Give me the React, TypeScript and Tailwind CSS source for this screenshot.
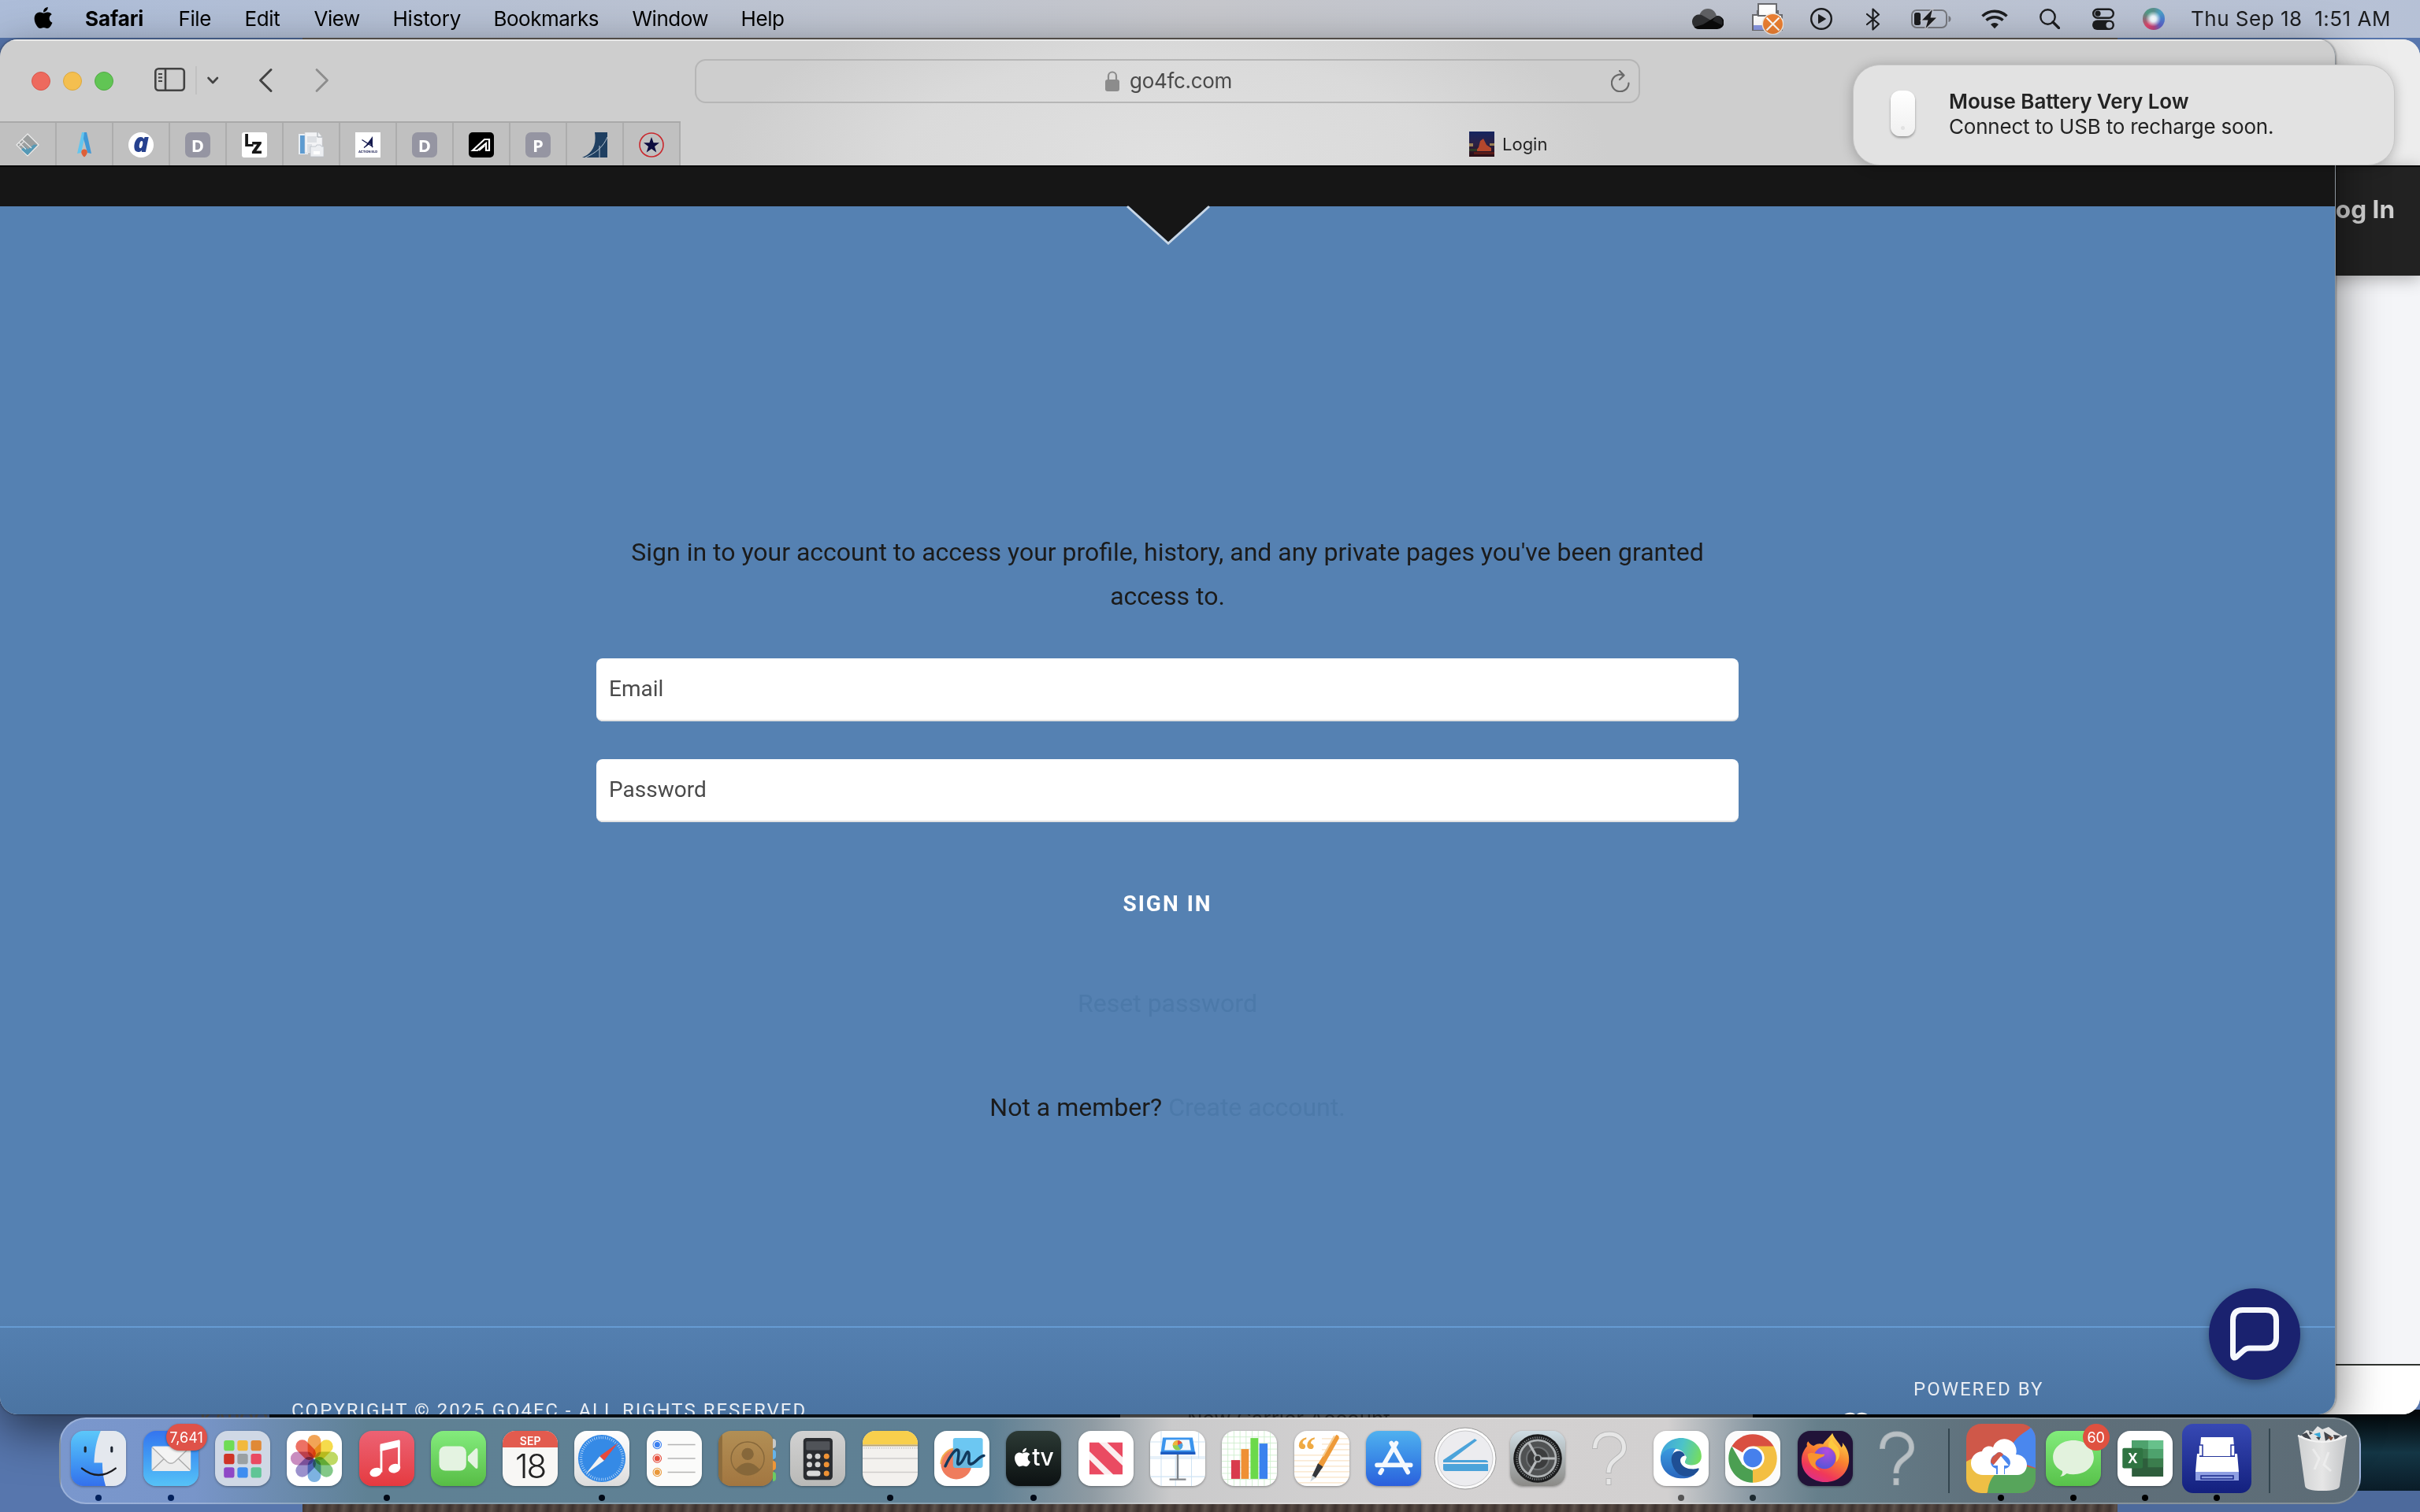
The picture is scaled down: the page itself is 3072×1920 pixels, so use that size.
import React from "react";
import { FaApple } from "react-icons/fa";

const sf = "font-['Inter','Liberation_Sans',sans-serif]";
const roboto = "font-['Roboto','Liberation_Sans',sans-serif]";

/* ---------- Menu bar ---------- */

const menus: [string, string][] = [
  ["Safari", "w-[118.5px] font-bold tracking-[-0.1px]"],
  ["File", "w-[84px] tracking-[-0.4px]"],
  ["Edit", "w-[88px] tracking-[-0.4px]"],
  ["View", "w-[100px] tracking-[-0.5px]"],
  ["History", "w-[128px] tracking-[-0.2px]"],
  ["Bookmarks", "w-[176px] tracking-[-0.5px]"],
  ["Window", "w-[138px] tracking-[-0.5px]"],
  ["Help", "w-[80px] tracking-[-0.4px]"],
];

function StatusIcons() {
  return (
    <div className="flex h-full items-center">
      <svg className="mr-9 h-[26px] w-10" viewBox="0 0 40 26">
        <circle cx="20" cy="11" r="11" fill="#606164" />
        <path d="M0 17a9 9 0 0 1 12-9l14 8-12 10H9a9 9 0 0 1-9-9z" fill="#2f3032" />
        <path d="M14 20l18-11a8.500 8.500 0 0 1 0 17H9c-3 0-5-1-6.500-2.500z" fill="#0a0a0a" />
        <path d="M26 15l5-6a8.500 8.500 0 0 1 7 12z" fill="#242527" />
      </svg>
      <svg className="mr-[34px] h-10 w-10" viewBox="0 0 40 40">
        <path d="M1 15h6v-5h26v5h5v19H1z" fill="#fff" stroke="#6b6c70" strokeWidth="2" />
        <path d="M8 1h23v15H8z" fill="#fff" stroke="#6b6c70" strokeWidth="2" />
        <path d="M2 28h16v6H2z" fill="#8a99e4" />
        <circle cx="26.500" cy="26.500" r="13.200" fill="#ee8133" stroke="#f5ede4" strokeWidth="1.500" />
        <path d="M18.500 18.500l16 16m0-16l-16 16" stroke="#fff" strokeWidth="2.200" />
      </svg>
      <svg className="mr-[43px] h-7 w-7" viewBox="0 0 28 28">
        <circle cx="14" cy="14" r="12.800" fill="none" stroke="#1c1d1f" strokeWidth="2.400" />
        <path d="M10.500 8.500v11l9-5.500z" fill="#1c1d1f" stroke="#1c1d1f" strokeLinejoin="round" />
      </svg>
      <svg className="mr-[39px] h-[29px] w-[18px]" viewBox="0 0 18 29">
        <path d="M1 8l15 12.500-7.500 7V1.500l7.500 7L1 21" fill="none" stroke="#1c1d1f" strokeWidth="2.200" strokeLinejoin="round" strokeLinecap="round" />
      </svg>
      <svg className="mr-[38px] h-7 w-[51px]" viewBox="0 0 51 28">
        <rect x="1" y="3" width="44" height="22" rx="6" fill="none" stroke="#77797f" strokeWidth="2" />
        <path d="M47.500 10v8q3-1 3-4t-3-4z" fill="#77797f" />
        <rect x="4" y="6" width="8" height="16" rx="2.500" fill="#1c1d1f" />
        <path d="M27 2L14 15.500h7.500L18.500 26 32 12.500h-7.500z" fill="#1c1d1f" stroke="#c4c6cf" strokeWidth="2.600" paintOrder="stroke" />
      </svg>
      <svg className="mr-10 h-[26px] w-[34px]" viewBox="0 0 34 26">
        <path d="M1.500 9.500a22.500 22.500 0 0 1 31 0M6.500 14.800a15.500 15.500 0 0 1 21 0" fill="none" stroke="#1c1d1f" strokeWidth="3.600" />
        <path d="M12 20a7.500 7.500 0 0 1 10 0l-5 5.200z" fill="#1c1d1f" />
      </svg>
      <svg className="mr-[41px] h-[26px] w-[26px]" viewBox="0 0 26 26">
        <circle cx="10.500" cy="10.500" r="9.200" fill="none" stroke="#1c1d1f" strokeWidth="2.400" />
        <path d="M17 17l7.500 7.500" stroke="#1c1d1f" strokeWidth="3.200" strokeLinecap="round" />
      </svg>
      <svg className="mr-9 h-7 w-7" viewBox="0 0 28 28">
        <rect x="1.200" y="1.700" width="25.600" height="11" rx="5.500" fill="none" stroke="#1c1d1f" strokeWidth="2.400" />
        <circle cx="7" cy="7.200" r="3.600" fill="#1c1d1f" />
        <rect x="0" y="15.500" width="28" height="12.500" rx="6.200" fill="#1c1d1f" />
        <circle cx="21.500" cy="21.700" r="4" fill="#bcc3d3" />
      </svg>
      <div className="mr-[33px] h-7 w-7 overflow-hidden rounded-full bg-[conic-gradient(from_0deg,#5a8f8c,#4aa0c4,#4b7fd0,#5d62c8,#b9437f,#e2466d,#8f6f7a,#4f9a86,#5a8f8c)]">
        <div className="h-full w-full bg-[radial-gradient(circle_at_48%_50%,#ffffff_0,#e9f4fb_18%,rgba(255,255,255,0)_48%)]" />
      </div>
      <span className="w-[291px] text-[26px] leading-[46px] tracking-[0.5px] whitespace-pre text-[#1c1d1f]">Thu Sep 18  1:51 AM</span>
    </div>
  );
}

function MenuBar() {
  return (
    <header className="flex h-12 items-center justify-between bg-linear-to-r from-[#adbdd9] via-[#c6c7cc] to-[#b6c1d6] pl-[39px] text-black">
      <div className="flex items-center">
        <FaApple className="mt-[-4px] mr-[37px] h-[31px] w-8" />
        {menus.map(([m, c]) => (
          <span key={m} className={`${c} text-[26px] leading-[46px] whitespace-nowrap`}>{m}</span>
        ))}
      </div>
      <StatusIcons />
    </header>
  );
}

/* ---------- Pinned tabs ---------- */

function LetterTile({ letter }: { letter: string }) {
  return (
    <div className="flex h-8 w-8 items-center justify-center rounded-[7px] bg-[#9595a2] font-['Open_Sans',sans-serif] text-[22px] leading-none font-bold text-white">{letter}</div>
  );
}

const pinned: React.ReactNode[] = [
  <svg className="h-8 w-8" viewBox="0 0 32 32">
    <path d="M16 2l14 14-14 14L2 16z" fill="#9c9f9f" stroke="#eee" strokeWidth="1.200" />
    <path d="M8 22l4.500-4 4 3.500 7.500-6L28.500 16 16 29z" fill="#5599b6" />
    <path d="M9 9l12 11M5 13l9 8.500M11.500 11.500l-6 6" stroke="#e6e6e6" strokeWidth="1.200" fill="none" />
  </svg>,
  <svg className="h-8 w-8" viewBox="0 0 32 32">
    <path d="M13 0h5l-6 26-5 1z" fill="#63c5ee" />
    <path d="M16 0h3l6 27-5-1-5-18z" fill="#4198d6" />
    <path d="M16 31.500c-6-5-4-10 0-10s6 5 0 10z" fill="#dd5f38" />
  </svg>,
  <div className="flex h-8 w-8 items-center justify-center rounded-full bg-white">
    <span className="mt-[-7px] font-['Open_Sans',sans-serif] text-[33px] leading-none font-extrabold text-[#26418f] italic">a</span>
  </div>,
  <LetterTile letter="D" />,
  <div className="relative h-8 w-8 rounded-[3px] bg-white font-['Roboto',sans-serif] leading-none font-black text-[#171717]">
    <span className="absolute top-0 left-[3px] text-[22px]">L</span>
    <span className="absolute top-[5px] left-[12px] text-[27px]">z</span>
  </div>,
  <svg className="h-8 w-8" viewBox="0 0 32 32">
    <path d="M0 2h12v26H0z" fill="#e8eef4" />
    <path d="M2 4h6v23H2z" fill="#5d9bd0" />
    <path d="M8 0h17l5 6v20H8z" fill="#f2f3f5" stroke="#cfd2d6" strokeWidth=".6" />
    <path d="M11 5h12v8H11zM11 15h6v10h-6z" fill="#dde0e4" />
    <path d="M24 0v6h6" fill="none" stroke="#9aa0a6" />
    <path d="M15 18h7l1-2h5l1 2h3v13H15z" fill="#eceef1" stroke="#b9bec6" strokeWidth=".8" />
    <path d="M19 24h8v4h-8z" fill="#fff" />
  </svg>,
  <svg className="h-8 w-8" viewBox="0 0 32 32">
    <path d="M0 0h32v32H0z" fill="#fff" />
    <path d="M11 20L22 5v15l-3.500-6z" fill="#151a4f" />
    <path d="M8.500 9.500l14 9M11 19.500l9-7" stroke="#151a4f" strokeWidth="1.400" />
    <text x="16" y="26" textAnchor="middle" fontSize="4" fontWeight="bold" fontFamily="Inter" fill="#151a4f">ACTION ELD</text>
  </svg>,
  <LetterTile letter="D" />,
  <svg className="h-8 w-8" viewBox="0 0 32 32">
    <rect width="32" height="32" rx="5" fill="#000" />
    <path d="M5 23L20 9h6v14h-4V14l-11 9zM13 23l7-6" fill="none" stroke="#fff" strokeWidth="2.200" />
  </svg>,
  <LetterTile letter="P" />,
  <svg className="h-8 w-8" viewBox="0 0 32 32">
    <path d="M16 0h16v32H0c10-4 19-12 16-32z" fill="#1f3f61" />
    <path d="M4 32C18 26 27 18 32 6M22 17v15" fill="none" stroke="#b9c6d2" strokeWidth="1" />
  </svg>,
  <svg className="h-8 w-8" viewBox="0 0 32 32">
    <circle cx="16" cy="16" r="15" fill="none" stroke="#c9282d" strokeWidth="1.600" />
    <path d="M16 6l2.600 7.300h7.400l-6 4.700 2.300 7.600L16 21l-6.300 4.600L12 18l-6-4.700h7.400z" fill="#0c0b3f" />
  </svg>,
];

/* ---------- Safari window ---------- */

function Toolbar() {
  return (
    <div className="flex h-[104px] shrink-0 items-center border-t-2 border-[#e9e9e9]">
      <div className="flex w-[196px] gap-4 pl-10">
        <i className="h-6 w-6 rounded-full border border-[#d9564b] bg-[#ed6a5e]" />
        <i className="h-6 w-6 rounded-full border border-[#dba840] bg-[#f4bf4f]" />
        <i className="h-6 w-6 rounded-full border border-[#52ab45] bg-[#61c554]" />
      </div>
      <svg className="-mt-[2px] h-9 w-56" viewBox="0 0 224 36" fill="none" stroke="#434343" strokeWidth="2.600">
        <rect x="1.300" y="3.300" width="36.500" height="27.500" rx="4" />
        <path d="M14 4v27" />
        <path d="M5 10h5M5 14.500h5M5 19h5" strokeWidth="2" />
        <path d="M53 0v36" stroke="#bfbfbf" strokeWidth="1.600" />
        <path d="M68.500 15l5.700 6 5.700-6" strokeWidth="2.600" strokeLinecap="round" strokeLinejoin="round" />
        <path d="M148 4.500L134.500 18 148 31.500" strokeWidth="3" strokeLinecap="round" strokeLinejoin="round" />
        <path d="M206 4.500L219.500 18 206 31.500" stroke="#8d8d8d" strokeWidth="2.800" strokeLinecap="round" strokeLinejoin="round" />
      </svg>
      <div className="-mt-px ml-[462px] flex h-14 w-[1200px] items-center rounded-[14px] border-2 border-[#b6b6b6] pl-[519px]">
        <svg className="h-[26px] w-[18px]" viewBox="0 0 18 26">
          <path d="M4 12V6.500a5 5 0 0 1 10 0V12" fill="none" stroke="#8c8c8c" strokeWidth="2.200" />
          <rect x="0" y="11" width="18" height="15" rx="3" fill="#8c8c8c" />
        </svg>
        <span className="ml-[13px] w-[140px] text-[26px] tracking-[-0.3px] text-[#4a4a4a]">go4fc.com</span>
        <svg className="ml-[471px] h-7 w-6" viewBox="0 0 24 28" fill="none" stroke="#6a6a6a" strokeWidth="2.200" strokeLinecap="round" strokeLinejoin="round">
          <path d="M22.500 16.500A10.800 10.800 0 1 1 16 6.500M11 1l5.500 5.600L11 12" />
        </svg>
      </div>
    </div>
  );
}

function TabBar() {
  return (
    <div className="flex h-14 shrink-0">
      <div className="flex border-t-2 border-[#a9a9a9] bg-[#c0c0c0]">
        {pinned.map((icon, i) => (
          <div key={i} className="flex w-[72px] items-center justify-center border-r-2 border-[#adadad] pt-px">{icon}</div>
        ))}
      </div>
      <div className="flex flex-1 items-center pt-[2px] pl-[1001px]">
        <svg className="h-8 w-8" viewBox="0 0 32 32">
          <defs>
            <linearGradient id="sky" x1="0" y1="0" x2="0" y2="1"><stop stopColor="#152560" /><stop offset=".5" stopColor="#2c2145" /><stop offset="1" stopColor="#2a0d12" /></linearGradient>
          </defs>
          <path d="M0 0h32v32H0z" fill="url(#sky)" />
          <path d="M14 12l4-3 4 8 6 4v4H8l4-5z" fill="#b4472c" />
          <path d="M0 15h5v4H0zM26 15h6v3h-6z" fill="#9a8055" />
          <path d="M0 22h10v3H0z" fill="#2f3a26" />
          <path d="M6 26h26v3H6z" fill="#5a1b18" />
        </svg>
        <span className="ml-[10px] text-[22px] text-[#242424]">Login</span>
      </div>
    </div>
  );
}

function LoginPage() {
  return (
    <div className={`relative flex min-h-0 flex-1 flex-col items-center bg-[linear-gradient(#5581b2_0,#5581b2_92%,#4b74a2_100%)] ${roboto}`}>
      <div className="h-[52px] w-full shrink-0 border-t-2 border-black bg-[#161616]" />
      <svg className="mt-[-2px] h-[52px] w-28 shrink-0" viewBox="0 0 112 52">
        <path d="M5 2L57 49 109 2" fill="none" stroke="#c9d7e6" strokeWidth="3" />
        <path d="M5 0H109L57 47z" fill="#161616" />
      </svg>
      <p className="mt-[361px] w-[1450px] text-center text-[32px] leading-[56px] text-[#1b1b1b]">
        Sign in to your account to access your profile, history, and any private pages you've been granted access to.
      </p>
      <div className="mt-[51px] flex w-[1450px] flex-col gap-12">
        <div className="flex h-20 items-center rounded-lg border-b-2 border-[#e2e2e2] bg-white px-4 text-[28px] text-[#4a4a4a]">Email</div>
        <div className="flex h-20 items-center rounded-lg border-b-2 border-[#e2e2e2] bg-white px-4 text-[28px] text-[#4a4a4a]">Password</div>
      </div>
      <button className="mt-[84px] text-[28px] leading-10 font-bold tracking-[2px] text-white">SIGN IN</button>
      <a className="mt-[78px] text-[32px] leading-[56px] text-[#4c79a9]">Reset password</a>
      <p className="mt-[76px] text-[32px] leading-[56px] text-[#1b1b1b]">
        Not a member? <a className="text-[#4c79a9]">Create account.</a>
      </p>
      <div className="mt-[250px] h-[2px] w-full shrink-0 bg-[#669bd3]" />
      <footer className="flex min-h-0 w-full flex-1 items-start overflow-hidden text-[24px] tracking-[2px] text-[#e8edf3]">
        <span className="mt-[87px] ml-[370px] w-[1968px] whitespace-nowrap">COPYRIGHT © 2025 GO4FC - ALL RIGHTS RESERVED</span>
        <svg className="mt-[107px] h-[10px] w-9" viewBox="0 0 36 10" fill="none" stroke="#fff" strokeWidth="4">
          <path d="M2 10c0-9 14-9 15-3M19 7c1-6 15-6 15 3" />
        </svg>
        <span className="mt-[60px] ml-[55px] whitespace-nowrap">POWERED BY</span>
      </footer>
      <div className="absolute right-11 bottom-11 flex h-[116px] w-[116px] items-center justify-center rounded-full bg-[#1a226f] shadow-[0_4px_12px_rgba(0,0,0,0.35)]">
        <svg className="h-[68px] w-[62px]" viewBox="0 0 62 68">
          <path d="M3.500 16Q3.500 3.500 16 3.500H45Q58.500 3.500 58.500 16V39Q58.500 52 45 52H24Q20 52 17 55L8 63Q3.500 66 3.500 60Z" fill="none" stroke="#f6f8fd" strokeWidth="7" strokeLinejoin="round" />
        </svg>
      </div>
    </div>
  );
}

function SafariWindow() {
  return (
    <section className="absolute top-[50px] left-0 flex h-[1746px] w-[2965px] flex-col overflow-hidden rounded-[22px] border-r border-[#8f979f] bg-[radial-gradient(ellipse_560px_220px_at_1480px_150px,#e0e0e0_0,#dadada_60%,#cecece_100%)] shadow-[0_20px_60px_rgba(0,0,0,0.55),0_0_3px_rgba(0,0,0,0.6)]">
      <Toolbar />
      <TabBar />
      <LoginPage />
    </section>
  );
}

/* ---------- Dock ---------- */

function Tile({ bg = "", children }: { bg?: string; children?: React.ReactNode }) {
  return (
    <div className={`h-[70px] w-[70px] overflow-hidden rounded-2xl shadow-[0_1px_3px_rgba(0,0,0,0.35)] ${bg}`}>
      <svg className="h-full w-full" viewBox="0 0 100 100">{children}</svg>
    </div>
  );
}

const Finder = () => (
  <Tile bg="bg-linear-to-b from-[#5cc8fa] to-[#3470ec]">
    <path d="M54 0C46 18 43 36 42 58h15c0 16 2 29 6 42h37V0z" fill="#e4e8ee" />
    <path d="M26 30v7M74 30v7" stroke="#1c2430" strokeWidth="4.500" strokeLinecap="round" />
    <path d="M20 68q30 24 61 0" fill="none" stroke="#1c1c20" strokeWidth="3.500" strokeLinecap="round" />
  </Tile>
);
const Mail = () => (
  <div className="relative">
    <Tile bg="bg-linear-to-b from-[#3574ee] to-[#56c2f7]">
      <rect x="15" y="28" width="71" height="45" rx="4" fill="#ececec" />
      <path d="M16 71l22-21M85 71L63 50" stroke="#aaa" strokeWidth="2" />
      <path d="M16 30l27 26q7 6 14 0l27-26" fill="#f4f4f4" stroke="#b0b0b0" strokeWidth="2" />
    </Tile>
    <span className="absolute -top-[9px] left-[29px] flex h-[34px] w-[52px] items-center justify-center rounded-full bg-[#df5249] text-[18px] text-white shadow-[0_1px_3px_rgba(0,0,0,0.4)]">7,641</span>
  </div>
);
const launch = ["#6fdc55", "#f2b93c", "#e08936", "#cf3527", "#9aa0a3", "#ea4a62", "#8e48c6", "#3f8df0", "#5fc596"];
const Launchpad = () => (
  <Tile bg="bg-[#cfd8e5]">
    {launch.map((c, i) => (
      <rect key={c} x={16 + (i % 3) * 24.500} y={17 + Math.floor(i / 3) * 24.500} width="19" height="19" rx="4" fill={c} />
    ))}
  </Tile>
);
const petals = ["#f0953a", "#f3d52f", "#b5d34a", "#6fbf74", "#68a5dc", "#8b7fc4", "#c07ab5", "#ea5a4a"];
const Photos = () => (
  <Tile bg="bg-white">
    {petals.map((c, i) => (
      <rect key={c} x="38" y="7" width="24" height="42" rx="12" fill={c} fillOpacity=".86" transform={`rotate(${i * 45} 50 50)`} className="mix-blend-multiply" />
    ))}
  </Tile>
);
const Music = () => (
  <Tile bg="bg-linear-to-b from-[#ec6274] to-[#e5393f]">
    <path d="M40 75V28l32-8v47" fill="none" stroke="#fff" strokeWidth="4" />
    <path d="M38 24l35-8v13l-35 8z" fill="#fff" />
    <ellipse cx="30" cy="75" rx="11" ry="8" fill="#fff" transform="rotate(-18 30 75)" />
    <ellipse cx="64" cy="68" rx="11" ry="8" fill="#fff" transform="rotate(-18 64 68)" />
  </Tile>
);
const FaceTime = () => (
  <Tile bg="bg-linear-to-b from-[#84ec7d] to-[#57bd45]">
    <rect x="15" y="28" width="49" height="44" rx="11" fill="#e4f3e1" />
    <path d="M67 46l14-14q4-2 4 3v30q0 5-4 3L67 54z" fill="#e4f3e1" />
  </Tile>
);
const Calendar = () => (
  <div className="flex h-[70px] w-[70px] flex-col items-center overflow-hidden rounded-2xl bg-[#f8f7f5] shadow-[0_1px_3px_rgba(0,0,0,0.35)]">
    <div className="flex h-[21px] w-full items-center justify-center bg-[#e25b4e] pt-1 text-[14px] font-semibold text-white">SEP</div>
    <span className="mt-[1px] text-[42px] leading-[46px] font-light tracking-[-2px] text-[#222]">18</span>
  </div>
);
const Compass = () => (
  <Tile bg="bg-linear-to-b from-white to-[#dcdcdc]">
    <circle cx="50" cy="50" r="43" fill="#358ae6" />
    <circle cx="50" cy="50" r="38" fill="none" stroke="#cfe4fa" strokeWidth="5" strokeDasharray="1 3" />
    <path d="M79 22L46 46l8 8z" fill="#e8493c" />
    <path d="M21 78l25-32 8 8z" fill="#f2f2f2" />
  </Tile>
);
const Reminders = () => (
  <Tile bg="bg-[#fbfbfa]">
    {["#3a7ff0", "#e5503f", "#e9983a"].map((c, i) => (
      <g key={c}>
        <circle cx="19" cy={25 + i * 25} r="5" fill={c} />
        <circle cx="19" cy={25 + i * 25} r="7.500" fill="none" stroke={c} strokeWidth="1.500" />
        <path d={`M38 ${25 + i * 25}h50`} stroke="#b4b4b4" strokeWidth="2" />
      </g>
    ))}
  </Tile>
);
const Contacts = () => (
  <div className="relative ml-1 flex w-[74px]">
    <Tile bg="bg-linear-to-b from-[#b28f55] to-[#a27640]">
      <path d="M0 0h7v100H0z" fill="#8d6c3d" />
      <circle cx="53" cy="50" r="30" fill="none" stroke="#86673a" strokeWidth="2" />
      <circle cx="53" cy="42" r="11" fill="#86673a" />
      <path d="M31 70q22-24 44 0q-22 20-44 0z" fill="#86673a" />
    </Tile>
    <div className="-ml-px flex flex-col gap-[2px] pt-[10px]">
      <i className="h-3 w-1 rounded-r bg-[#c9c9c6]" />
      <i className="h-3 w-1 rounded-r bg-[#66b4ea]" />
      <i className="h-3 w-1 rounded-r bg-[#ee9638]" />
      <i className="h-3 w-1 rounded-r bg-[#6ccb62]" />
    </div>
  </div>
);
const Calculator = () => (
  <Tile bg="bg-linear-to-b from-[#d2d2d2] to-[#b9b9b7]">
    <rect x="24" y="13" width="53" height="76" rx="6" fill="#2a2c30" />
    <rect x="29" y="19" width="43" height="16" rx="2" fill="#505358" />
    {[46, 61].map((y) => [35, 50, 66].map((x, i) => <circle key={`${x}-${y}`} cx={x} cy={y} r="5" fill={i === 2 ? "#ef9234" : "#d3d3d3"} />))}
    <rect x="30" y="72" width="25" height="10" rx="5" fill="#d9d9d9" />
    <circle cx="66" cy="77" r="5" fill="#ef9234" />
  </Tile>
);
const Notes = () => (
  <Tile bg="bg-[#f3f1ee]">
    <path d="M0 0h100v25H0z" fill="#f8cf4c" />
    <path d="M0 26.500h100" stroke="#b9a676" strokeWidth="3" />
    <path d="M2 31h98" stroke="#bbb" strokeWidth="2" strokeDasharray="1.500 2.500" />
    <path d="M0 50h100M0 75h100" stroke="#cfcdcb" strokeWidth="2" />
  </Tile>
);
const Freeform = () => (
  <Tile bg="bg-white">
    <circle cx="40" cy="60" r="28" fill="#ef7c5d" />
    <path d="M12 60a28 28 0 0 1 28-28" fill="none" stroke="#f3ac4c" strokeWidth="3" />
    <rect x="34" y="13" width="54" height="54" rx="4" fill="#58bff0" fillOpacity=".88" />
    <path d="M20 64C30 42 42 28 44 37S38 64 46 60 58 34 62 39 58 62 67 60 80 46 90 45" fill="none" stroke="#123a5e" strokeWidth="5" strokeLinecap="round" />
  </Tile>
);
const AppleTV = () => (
  <div className="flex h-[70px] w-[70px] items-center justify-center rounded-2xl bg-linear-to-b from-[#2c3a35] to-[#0c1112] text-white shadow-[0_1px_3px_rgba(0,0,0,0.35)]">
    <FaApple className="-mt-1 h-[27px] w-[22px]" />
    <span className="-mt-1 ml-px text-[30px] leading-none font-medium tracking-[-0.5px]">tv</span>
  </div>
);
const News = () => (
  <Tile bg="bg-white">
    <rect x="20" y="21" width="60" height="58" rx="2" fill="#fbeef0" />
    <path d="M20 21h17l43 42v16H63L20 37z" fill="#ea4b62" />
    <path d="M52 21h28v27zM20 52v27h27z" fill="#ea4b62" />
  </Tile>
);
const Keynote = () => (
  <Tile bg="bg-white">
    <path d="M0 20h100M0 47h100M0 50h100M0 83h100M20 0v100M46 45v55M75 45v55M88 0v50" stroke="#cfe3f4" strokeWidth="1.500" />
    <path d="M23 12h54l5 31H19z" fill="#3a94ee" />
    <path d="M19 38h63v5H19z" fill="#1d5bc0" />
    <path d="M29 16h42l3 19H26z" fill="#f4f9fd" />
    <circle cx="50" cy="26" r="9" fill="#8ccf50" />
    <path d="M50 26V17a9 9 0 0 1 8 5z" fill="#e14f43" />
    <path d="M50 26V17a9 9 0 0 0-9 9z" fill="#f2b33c" />
    <path d="M50 26l8-4a9 9 0 0 1-3 12z" fill="#4aa0e8" />
    <path d="M50 43v45" stroke="#7b828b" strokeWidth="3.500" />
    <path d="M35 88h30" stroke="#84878c" strokeWidth="3.500" />
  </Tile>
);
const Numbers = () => (
  <Tile bg="bg-white">
    {[11, 22, 33, 44, 55, 66, 77, 88].map((v) => <path key={v} d={`M0 ${v}h100M${v} 0v100`} stroke="#cdeecb" strokeWidth="1.200" />)}
    <rect x="17" y="53" width="16" height="34" fill="#d93b4c" />
    <rect x="35" y="33" width="14" height="54" fill="#ef9034" />
    <rect x="52" y="13" width="14" height="74" fill="#6bd94a" />
    <rect x="68" y="23" width="15" height="64" fill="#3a82ee" />
  </Tile>
);
const Pages = () => (
  <Tile bg="bg-white">
    <path d="M0 44h100M0 54h100M0 64h100M0 74h100M0 84h100M0 94h100M50 14h50M50 24h50M50 34h50" stroke="#fae3c6" strokeWidth="1.800" />
    <text x="5" y="59" fontSize="68" fontFamily="Liberation Serif" fontWeight="bold" fill="#efaa43">“</text>
    <path d="M76 7q6 1 5 7L50 69l-9-6z" fill="#ee9a38" />
    <path d="M73 9L52 46" stroke="#f7cf96" strokeWidth="3" />
    <path d="M43 59l9 6-14 21-6-4z" fill="#34363a" />
    <path d="M33 81l6 4-10 7z" fill="#cbd5db" />
  </Tile>
);
const AppStore = () => (
  <Tile bg="bg-linear-to-b from-[#50b1ef] to-[#2c5fdc]">
    <path d="M55 22L32 62M29 71l-3 5M46 22l30 53M20 62h61" stroke="#f5f9fd" strokeWidth="8" strokeLinecap="round" />
  </Tile>
);
const ScanCircle = () => (
  <svg className="h-[80px] w-[80px]" viewBox="0 0 80 80">
    <circle cx="40" cy="40" r="39" fill="#fbfbfb" stroke="#9a9a9a" />
    <circle cx="40" cy="40" r="35" fill="#ececef" stroke="#c9c9cc" />
    <path d="M52 15l3 2-33 25h43q4 0 4 3H12v-3z" fill="#4ba3da" />
    <path d="M12 47h57v9H15q-3 0-3-3z" fill="#4ba3da" />
  </svg>
);
const Settings = () => (
  <Tile bg="bg-linear-to-b from-[#cfdde4] to-[#8b8a87]">
    <circle cx="50" cy="50" r="44" fill="#1b1c1d" />
    <circle cx="50" cy="50" r="38" fill="none" stroke="#74787a" strokeWidth="3.500" strokeDasharray="2 2" />
    <circle cx="50" cy="50" r="33" fill="#505253" stroke="#adb1b3" strokeWidth="4" />
    <circle cx="50" cy="50" r="20" fill="#3c3d3e" stroke="#6d7072" strokeWidth="3" />
    <path d="M50 50h32M50 50L34 22M50 50L34 78" stroke="#b7babc" strokeWidth="4.500" />
    <circle cx="50" cy="50" r="6" fill="#303132" stroke="#9fa3a5" strokeWidth="3" />
  </Tile>
);
const Question = ({ dark }: { dark?: boolean }) => (
  <svg className="h-[70px] w-[46px]" viewBox="0 0 46 70" fill="none" stroke={dark ? "#a7b0b5" : "#b7b7b7"} strokeWidth="7">
    <path d="M4.500 23C4.500 10 12 4 23 4S41.500 11 41.500 21C41.500 36 22 34 22 54M22 60v9" />
    <path d="M4.500 22C5 10 12 4 23 4S41.500 11 41.500 21C41.500 36 22 34 22 53M22 61v7" stroke={dark ? "#b9c0c4" : "#e6e6e6"} strokeWidth="5" />
  </svg>
);
const Edge = () => (
  <Tile bg="bg-white">
    <defs>
      <linearGradient id="edgeTop" x1="0" y1=".3" x2="1" y2=".5"><stop stopColor="#3fa3dc" /><stop offset=".5" stopColor="#4cc3c9" /><stop offset="1" stopColor="#74dc62" /></linearGradient>
      <linearGradient id="edgeMid" x1="0" y1="0" x2="0" y2="1"><stop stopColor="#3a9be0" /><stop offset="1" stopColor="#2a66bd" /></linearGradient>
    </defs>
    <path d="M13 48C14 26 31 13 50 13s37 14 37 33c0 12-10 17-20 16s-12-5-9-9-1-15-12-19-26 1-33 14z" fill="url(#edgeTop)" />
    <path d="M13 46c6-12 18-17 28-14-8 6-10 26 0 38s24 14 36 7C68 85 57 87 49 86 25 85 11 66 13 46z" fill="url(#edgeMid)" />
    <path d="M35 42c7-9 20-6 22 3-8 3-8 13 2 20s19 3 23 3c2 1-2 7-9 12-14 6-28 1-34-9s-9-21-4-29z" fill="#1f4f95" />
    <path d="M57 45c-10 1-11 12-3 19s18 5 25 2c-6-1-23-3-22-10s6-8 0-11z" fill="#fff" />
  </Tile>
);
const Chrome = () => (
  <Tile bg="bg-[#fbfbfb]">
    <path d="M50 50L12 28a44 44 0 0 1 76 0z" fill="#d94f41" />
    <path d="M50 50L88 28a44 44 0 0 1-38 66z" fill="#f3bf42" />
    <path d="M50 28h38l-17 34L50 94l19-34z" fill="#f3bf42" />
    <path d="M12 28l19 33 19 11 0 22A44 44 0 0 1 12 28z" fill="#4b9f52" />
    <path d="M50 94l18-32-18 8z" fill="#f3bf42" />
    <circle cx="50" cy="49" r="21" fill="#fff" />
    <circle cx="50" cy="49" r="17" fill="#4680ec" />
  </Tile>
);
const Firefox = () => (
  <Tile bg="bg-[#211338]">
    <defs>
      <linearGradient id="foxBody" x1=".8" y1="0" x2=".3" y2="1"><stop stopColor="#fde14e" /><stop offset=".45" stopColor="#f9822f" /><stop offset=".8" stopColor="#f0385a" /><stop offset="1" stopColor="#dc2f8c" /></linearGradient>
      <radialGradient id="foxGlobe" cx=".6" cy=".2" r=".9"><stop stopColor="#b14bdd" /><stop offset="1" stopColor="#4b56d8" /></radialGradient>
    </defs>
    <path d="M63 4C67 16 76 21 79 30c3-2 3-6 2-9 8 9 13 20 12 34C91 78 73 93 50 93S7 76 7 54c0-11 4-19 10-26-1-4 0-7 2-9 3 5 6 7 10 8 7-5 12-4 17-3C50 17 58 12 63 4z" fill="url(#foxBody)" />
    <circle cx="49" cy="49" r="20" fill="url(#foxGlobe)" />
    <path d="M18 42c10-5 16 2 31 0-1 6-8 5-14 11s-2 15 6 19c-14-2-22-15-23-30z" fill="#f9932f" />
    <path d="M57 30c11 4 16 15 12 27 8-7 9-19 4-27-4-6-10-8-11-16-5 6-8 10-5 16z" fill="#fcc93f" />
  </Tile>
);
const CloudUp = () => (
  <svg className="h-[88px] w-[88px] rounded-[19px]" viewBox="0 0 88 88">
    <path d="M0 0h88v88H0z" fill="#cf5849" />
    <path d="M88 0L78 8C62 18 54 28 54 44l34 12z" fill="#4a87ee" />
    <path d="M0 48q12-8 26-4l14 24-14 20H0z" fill="#eebf45" />
    <path d="M27 88C28 70 38 58 54 54h22l12 3v31z" fill="#57a55b" />
    <path d="M22 65a15 15 0 0 1-2-30c2-6 9-8 14-5a15 15 0 0 1 29 9c8 0 14 6 14 13s-5 13-12 13z" fill="#fff" />
    <path d="M38 57q-8-3-7-10 1-6 6-8 5-6 10 0 9 4 9 11-1 6-7 7V64H38z" fill="#4a87ee" />
    <path d="M31 49q0-6 6-10 5-6 10 0L36 53z" fill="#cf5849" />
    <path d="M44 41l10 12h-6v12h-8V53h-6z" fill="#fff" />
  </svg>
);
const Messages = () => (
  <div className="relative">
    <Tile bg="bg-linear-to-b from-[#82ec7b] to-[#58c24a]">
      <path d="M50 17c21 0 37 13 37 31S71 79 50 79q-7 0-12-2-5 5-12 6 5-5 4-10C19 68 13 59 13 48c0-18 16-31 37-31z" fill="#e2f2dd" />
    </Tile>
    <span className="absolute -top-[9px] left-[47px] flex h-[34px] w-[34px] items-center justify-center rounded-full bg-[#df5140] text-[18px] text-white">60</span>
  </div>
);
const Excel = () => (
  <Tile bg="bg-white">
    <path d="M26 17h57v66H26z" fill="#2e5e3c" />
    <path d="M26 17h29v16H26z" fill="#4ea26d" /><path d="M55 17h28v16H55z" fill="#67c18b" />
    <path d="M26 33h29v17H26z" fill="#3b7d4d" /><path d="M55 33h28v17H55z" fill="#4ea26d" />
    <path d="M55 50h28v16H55z" fill="#3b7d4d" />
    <rect x="9" y="31" width="37" height="37" rx="3" fill="#2f7442" />
    <text x="27.500" y="58" textAnchor="middle" fontSize="25" fontWeight="bold" fontFamily="Open Sans" fill="#fff">X</text>
  </Tile>
);
const Scanner = () => (
  <svg className="h-[88px] w-[88px] rounded-[14px]" viewBox="0 0 88 88">
    <defs><linearGradient id="scanBg" x1="0" y1="0" x2="0" y2="1"><stop stopColor="#3749b4" /><stop offset="1" stopColor="#13207e" /></linearGradient></defs>
    <path d="M0 0h88v88H0z" fill="url(#scanBg)" />
    <path d="M24 17h41l1 12v12H23V29z" fill="#fff" />
    <path d="M21 27h5v14h-5zM62 27h5v14h-5z" fill="#fff" stroke="#2435a0" strokeWidth="1.500" />
    <path d="M19 38h3v4h45v-4h3l2 23H17z" fill="#fff" />
    <path d="M17 61h55v11H17z" fill="#8f9fe2" />
    <path d="M24 66h41v4H24z" fill="#8f9fe2" stroke="#1d2b8c" strokeWidth="1.500" />
  </svg>
);
const Trash = () => (
  <svg className="h-[84px] w-16" viewBox="0 0 64 84">
    <defs><linearGradient id="bin" x1="0" y1="0" x2="1" y2="0"><stop stopColor="#cfd1d2" /><stop offset=".5" stopColor="#e6e6e6" /><stop offset="1" stopColor="#c2c4c6" /></linearGradient></defs>
    <path d="M4 14l8-8 8 2 6-7 6 4 8-3 8 6 10 6-6 8H8z" fill="#e3e3e3" />
    <path d="M1 12q31 14 62 0l-9 65q-1 6-22 6t-22-6z" fill="url(#bin)" />
    <path d="M5 12l7-3 6 9-8-2zM34 8l10 6-8 6zM46 12l9 1-7 6zM15 7l5 3-4 2zM24 15l6-1-2 5z" fill="#42464d" />
    <path d="M21 11l8-2 1 7z" fill="#39a8d8" /><path d="M39 14l7 1-3 5z" fill="#7c4a35" />
    <path d="M1 13q31 16 62 0" fill="none" stroke="#f3f3f3" strokeWidth="2" />
    <path d="M20 30l8 12-6 14M40 34l-6 16 9 8" stroke="#f4f4f4" strokeWidth="3" fill="none" opacity=".6" />
  </svg>
);

type App = { icon: React.ReactNode; dot?: string };
const mainApps: App[] = [
  { icon: <Finder />, dot: "bg-[#03215c]" }, { icon: <Mail />, dot: "bg-[#03215c]" }, { icon: <Launchpad /> }, { icon: <Photos /> },
  { icon: <Music />, dot: "bg-[#020916]" }, { icon: <FaceTime /> }, { icon: <Calendar /> }, { icon: <Compass />, dot: "bg-[#020916]" },
  { icon: <Reminders /> }, { icon: <Contacts /> }, { icon: <Calculator /> }, { icon: <Notes />, dot: "bg-[#020916]" },
  { icon: <Freeform /> }, { icon: <AppleTV />, dot: "bg-[#020916]" }, { icon: <News /> }, { icon: <Keynote /> },
  { icon: <Numbers /> }, { icon: <Pages /> }, { icon: <AppStore /> }, { icon: <ScanCircle /> }, { icon: <Settings /> },
  { icon: <Question /> }, { icon: <Edge />, dot: "bg-[#555]" }, { icon: <Chrome />, dot: "bg-[#1d2a30]" }, { icon: <Firefox /> },
  { icon: <Question dark /> },
];
const recentApps: App[] = [
  { icon: <CloudUp />, dot: "bg-black" }, { icon: <Messages />, dot: "bg-black" }, { icon: <Excel />, dot: "bg-black" }, { icon: <Scanner />, dot: "bg-black" },
];

function DockItem({ icon, dot }: App) {
  return (
    <div className="flex w-[91.32px] shrink-0 flex-col items-center">
      <div className="flex h-[96px] items-center justify-center pt-1">{icon}</div>
      <i className={`h-2 w-2 rounded-full ${dot ?? "bg-transparent"}`} />
    </div>
  );
}

function Dock() {
  return (
    <nav className="absolute top-[1800px] left-[75px] flex h-[110px] w-[2922px] rounded-[34px] border-2 border-white/25 bg-[linear-gradient(90deg,#7a97cd_0,#7895c9_170px,#5f8194_390px,#5f8094_1180px,#8f9ba3_1310px,#cacacb_1410px,#d4d2d2_1700px,#d2d0d0_2040px,#8797a2_2150px,#667f8b_2230px,#5f707b_2450px,#5d6c76_2922px)] pl-[2.600px]">
      {mainApps.map((a, i) => <DockItem key={i} {...a} />)}
      <div className="flex w-[41px] justify-center pt-3"><i className="h-[82px] w-[2px] bg-[#33454f]" /></div>
      {recentApps.map((a, i) => <DockItem key={i} {...a} />)}
      <div className="flex w-[42.500px] justify-center pt-3"><i className="h-[82px] w-[2px] bg-[#33454f]" /></div>
      <DockItem icon={<Trash />} />
    </nav>
  );
}

/* ---------- Desktop ---------- */

function Wallpaper() {
  return (
    <div className="absolute inset-0 bg-[#5776ad]">
      <div className="ml-[384px] h-14 w-[2304px] bg-[#6c655e]" />
      <div className="absolute bottom-[10px] left-[254px] flex h-[120px] w-[2818px] leading-6">
        <div className="w-[88px] text-[24px] font-semibold whitespace-nowrap text-[#76736f]">KAPOOI</div>
        <div className="w-[1080px] bg-[#0c1a25]" />
        <div className="w-[803px] bg-[#7b7b7b] pl-[85px] text-[26px] text-[#3c3c3c]">New Carrier Account</div>
        <div className="flex-1 bg-[#04080b]" />
      </div>
      <div className="absolute right-0 bottom-[27px] h-[97px] w-[140px] bg-linear-to-b from-[#04090c] via-[#143645] to-[#0a1c28]" />
      <div className="absolute right-0 bottom-0 h-[27px] w-[384px] bg-[#4d6a9c]" />
      <div className="absolute bottom-0 left-[384px] h-[12px] w-[2304px] bg-[repeating-linear-gradient(97deg,#3d322e_0,#554841_7px,#403531_15px,#5d514a_22px,#3d322e_31px)]" />
    </div>
  );
}

function BackWindow() {
  return (
    <section className="absolute top-[50px] right-0 flex h-[1746px] w-[400px] flex-col overflow-hidden rounded-[22px] bg-[#f4f5f8]">
      <div className="h-[160px] bg-[#ededed]" />
      <div className="flex h-[140px] justify-end border-t-2 border-black bg-[#222] pt-[36px] pr-[32px] text-[31.500px] leading-[36px] font-bold text-[#d0d0d0] shadow-[0_4px_20px_rgba(0,0,0,0.3)]">Log In</div>
      <div className="h-[1384px] border-b-2 border-[#2f332f]" />
      <div className="flex-1 bg-white" />
    </section>
  );
}

function Notification() {
  return (
    <aside className="absolute top-[82px] left-[2352px] flex h-32 w-[688px] items-center rounded-[34px] border border-[#c6c6c6] bg-[#e2e2e2] pl-[47px] shadow-[0_2px_16px_rgba(0,0,0,0.25)]">
      <div className="-mt-1 flex h-[58px] w-[31px] items-end justify-center rounded-[12px] bg-linear-to-b from-white to-[#f0f0f0] pb-2 shadow-[0_2px_3px_rgba(0,0,0,0.35)]">
        <i className="h-[5px] w-[5px] rounded-full bg-[#e2e2e2]" />
      </div>
      <div className="-mt-[2px] ml-[43px] flex flex-col text-[26px] leading-8 whitespace-nowrap text-[#232323]">
        <span className="font-semibold tracking-[-0.1px]">Mouse Battery Very Low</span>
        <span className="tracking-[-0.2px]">Connect to USB to recharge soon.</span>
      </div>
    </aside>
  );
}

export default function App() {
  return (
    <main className={`relative h-[1920px] w-[3072px] overflow-hidden ${sf}`}>
      <Wallpaper />
      <div className="relative"><MenuBar /></div>
      <BackWindow />
      <SafariWindow />
      <Dock />
      <Notification />
    </main>
  );
}
